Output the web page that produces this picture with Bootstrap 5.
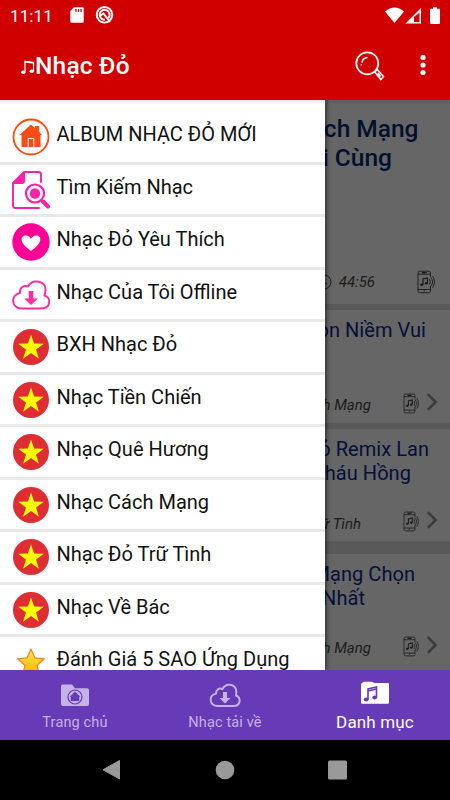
<!DOCTYPE html>
<html lang="vi">
<head>
<meta charset="utf-8">
<meta name="viewport" content="width=device-width, initial-scale=1">
<title>Nhạc Đỏ</title>
<link href="https://cdn.jsdelivr.net/npm/bootstrap@5.3.0/dist/css/bootstrap.min.css" rel="stylesheet">
<style>
body{font-family:Roboto,"Noto Sans",sans-serif;background:#000}
svg{display:block;flex:none}
.screen{width:450px;height:800px}
.topbar{height:100px;background:#d10000;z-index:5}
.status{height:32px;padding:0 9.5px 0 10px}
.clock{font-size:17px;line-height:32px;letter-spacing:.1px}
.status-icons{margin-left:17px}
.titlebar{height:68px;padding:0 24.5px 0 20px}
.app-title{font-size:24.5px;font-weight:500;line-height:68px;letter-spacing:.2px}
.kebab{margin-left:35px}
.content{height:570px;background:#595959;overflow:hidden}
.song{background:#666;color:#04103a;padding-top:8px;height:112.5px;margin-bottom:6px;font-size:20px;line-height:24px;letter-spacing:.05px}
.song.lead-song{height:204px;padding-top:14px;font-size:24.5px;font-weight:500;line-height:29px;letter-spacing:0;color:#00102f}
.song.wide-gap{margin-bottom:13px}
.song.tall{height:140px}
.meta{height:24px;color:#1c1c1c;font-size:15px;font-weight:400;font-style:italic;margin-bottom:7.5px;letter-spacing:0}
.meta .who{padding-top:4px;margin-right:32px}
.meta .who-wide{margin-right:42px}
.lead-song .meta{margin-bottom:10px;padding-right:15px}
.lead-song .who{padding-top:0;margin:0 42px 0 7px}
.chev{margin:-3px 0 0 7px}
.r21{padding-right:21px}.r24{padding-right:24px}.r32{padding-right:31.5px}.r35{padding-right:35px}.r39{padding-right:39px}.r58{padding-right:58px}.r85{padding-right:85px}
.tail{padding-right:12px}
.tall .meta{margin-bottom:36px}
.drawer{left:0;top:0;width:325px;height:570px;background:#fff;overflow:hidden;padding-top:12px;box-shadow:1px 0 5px rgba(0,0,0,.65)}
.entry{height:52.5px;border-bottom:3px solid #e9e9e9;padding-left:12px;color:#111;font-size:20px;letter-spacing:0}
.entry svg{margin-top:1px;margin-right:6.5px}
.entry span{line-height:24px;padding-bottom:5px}
.topshade{left:0;top:0;height:5px;background:linear-gradient(rgba(0,0,0,.09),transparent)}
.tabs{height:70px;background:#673ab7;color:#c5b3e5;font-size:14.5px}
.tabs .tab{padding-top:11px}
.tabs .tab span{line-height:20px;margin-top:4px;letter-spacing:.15px}
.tabs .active-tab{color:#fff;padding-top:9px}
.tabs .active-tab span{font-size:17px;margin-top:5px}
.sysnav{height:60px;color:#999}
</style>
<script src="https://cdn.jsdelivr.net/npm/bootstrap@5.3.0/dist/js/bootstrap.bundle.min.js"></script>
</head>
<body class="m-0">
<svg width="0" height="0" class="position-absolute">
  <symbol id="flag" viewBox="0 0 38 38"><circle cx="19" cy="19" r="18" fill="#df2d34"/><path fill="#ff0" d="M19 6.500l3.100 9.100 9.700.1-7.800 5.800 2.900 9.200-7.900-5.600-7.900 5.600 2.900-9.200-7.800-5.800 9.700-.1z"/></symbol>
  <symbol id="ringtone" viewBox="0 0 18 24"><g fill="none" stroke="#1c1c1c" stroke-width=".9"><rect x="1" y="1.200" width="12.500" height="21.500" rx="1.800"/><path d="M1 4.200h12.500M1 19.500h12.500M7.200 20v1.600"/><path stroke-width="1.500" d="M5 2.700h4.500"/><path d="M6 14.500V9l4.500-1v5" stroke-width="1.200"/></g><path stroke="#666" stroke-width="2.400" d="M13.500 7v9"/><path fill="none" stroke="#1c1c1c" stroke-width=".9" d="M12.400 9.200q2 2.700 0 5.400M14 7.600q3.200 4.200 0 8.600M15.600 6q3.800 6 0 11.800"/><ellipse cx="4.800" cy="14.700" rx="1.600" ry="1.300" fill="#1c1c1c"/><ellipse cx="9.300" cy="13.300" rx="1.500" ry="1.200" fill="#1c1c1c"/></symbol>
  <symbol id="chev" viewBox="0 0 12 18"><path d="M1.800 1.200 9.600 9l-7.800 7.800" fill="none" stroke="#3c3c3c" stroke-width="2.600"/></symbol>
  <linearGradient id="gold" x1="0" y1="0" x2="0" y2="1"><stop offset="0" stop-color="#ffef45"/><stop offset="1" stop-color="#ffb000"/></linearGradient>
</svg>
<div class="screen overflow-hidden">
  <header class="topbar position-relative text-white">
    <div class="status d-flex align-items-center">
      <span class="clock">11:11</span>
      <svg class="status-icons me-auto" width="46" height="20" viewBox="0 0 46 20"><path fill="#fff" d="M4 1.200h8.500a1.200 1.200 0 0 1 1.200 1.200v13.200a1.200 1.200 0 0 1-1.200 1.200h-11A1.200 1.200 0 0 1 .3 15.600V5z"/><path stroke="#d10000" stroke-width="1.300" d="M5.900 3v3M8.500 3v3M11 3v3"/><g fill="none" stroke="#fff"><circle cx="34.500" cy="8.800" r="7.800" stroke-width="1.900"/><path stroke-width="2" d="M38.500 12a5 5 0 1 0-3.500 1.800M30.500 9.500l3-2 6.500 8.500"/></g></svg>
      <svg width="56" height="18" viewBox="0 0 56 18"><path fill="#fff" d="M0 4.500Q9.500-3.500 19 4.500L9.500 16z"/><path fill="#fff" d="M36 1v15.500H20.500z"/><path fill="#d10000" d="M34.500 5.500V15H29v-5z"/><path fill="#fff" d="M48 .3h4v1.500h2.200a.8.8 0 0 1 .8.8v13.500a.8.8 0 0 1-.8.8h-8.400a.8.8 0 0 1-.8-.8V2.600a.8.8 0 0 1 .8-.8H48z"/></svg>
    </div>
    <div class="titlebar d-flex align-items-center">
      <svg width="15" height="18" viewBox="0 0 15 18"><path fill="none" stroke="#fff" stroke-width="1.200" d="M5 15V4.500l8.500 1V14"/><path stroke="#fff" stroke-width="1.800" d="M4.500 4.600l9.500 1.200"/><ellipse cx="3.300" cy="15.300" rx="2.200" ry="1.800" fill="#fff"/><ellipse cx="11.800" cy="14.300" rx="2.200" ry="1.800" fill="#fff"/></svg>
      <span class="app-title">Nhạc Đỏ</span>
      <svg class="ms-auto" width="30" height="30" viewBox="0 0 30 30" fill="none" stroke="#fff"><circle cx="12.300" cy="12.300" r="11" stroke-width="1.700"/><path stroke-width="1.500" d="M7 11.600a6 6 0 0 1 5.500-5"/><path stroke-width="1.500" d="M19.800 21l2.500-2.500 6.200 7-2.700 3zM22.800 22l2.800 3.500"/><path stroke-width="1.300" d="M6.300 13.300v1.200"/></svg>
      <svg class="kebab" width="6" height="22" viewBox="0 0 6 22" fill="#fff"><circle cx="3" cy="2.500" r="2.600"/><circle cx="3" cy="10" r="2.600"/><circle cx="3" cy="17.500" r="2.600"/></svg>
    </div>
  </header>

  <main class="content position-relative">
    <article class="song lead-song d-flex flex-column text-end">
      <div class="r32">Cách Mạng</div><div class="r58">Đời Cùng</div>
      <div class="meta d-flex justify-content-end align-items-center mt-auto"><svg width="16" height="16" viewBox="0 0 16 16" fill="none" stroke="#1c1c1c"><circle cx="8" cy="8" r="7"/><path d="M8 4v4l3 2"/></svg><span class="who">44:56</span><svg width="18" height="24"><use href="#ringtone"/></svg></div>
    </article>
    <article class="song d-flex flex-column text-end">
      <div class="r24">Còn Niềm Vui</div>
      <div class="meta tail d-flex justify-content-end align-items-center mt-auto"><span class="who">Cách Mạng</span><svg width="16" height="21"><use href="#ringtone"/></svg><svg class="chev" width="12" height="18"><use href="#chev"/></svg></div>
    </article>
    <article class="song wide-gap d-flex flex-column text-end">
      <div class="r21">Đỏ Remix Lan</div><div class="r39">Cháu Hồng</div>
      <div class="meta tail d-flex justify-content-end align-items-center mt-auto"><span class="who who-wide">Trữ Tình</span><svg width="16" height="21"><use href="#ringtone"/></svg><svg class="chev" width="12" height="18"><use href="#chev"/></svg></div>
    </article>
    <article class="song tall d-flex flex-column text-end">
      <div class="r35">Mạng Chọn</div><div class="r85">Nhất</div>
      <div class="meta tail d-flex justify-content-end align-items-center mt-auto"><span class="who">Cách Mạng</span><svg width="16" height="21"><use href="#ringtone"/></svg><svg class="chev" width="12" height="18"><use href="#chev"/></svg></div>
    </article>

    <nav class="drawer position-absolute">
      <div class="entry d-flex align-items-center"><svg width="38" height="38" viewBox="0 0 38 38"><circle cx="19" cy="19" r="17.500" fill="none" stroke="#ff4a14" stroke-width="1.800"/><path fill="#ff4a14" d="M19 6.500l4 3.500V8h4v5.500l3 3.500h-1.500v12H9.500V17H7.500z"/><path fill="none" stroke="#fff" d="M16.200 29v-8.500h5.600V29"/></svg><span>ALBUM NHẠC ĐỎ MỚI</span></div>
      <div class="entry d-flex align-items-center"><svg width="38" height="38" viewBox="0 0 38 38"><path fill="none" stroke="#fb21a8" stroke-width="1.900" stroke-linecap="round" stroke-linejoin="round" d="M27 37H3.500Q1 37 1 34.500V12L12 1h14.500Q29 1 29 3.500v7.500"/><path fill="#fb21a8" d="M0 13L13 0v10q0 3-3 3z"/><circle cx="23" cy="22.500" r="9" fill="#fff" stroke="#fb21a8" stroke-width="2.200"/><circle cx="23" cy="22.500" r="5.200" fill="#fb21a8"/><path stroke="#fb21a8" stroke-width="4" stroke-linecap="round" d="M31 30.500l5 5"/></svg><span>Tìm Kiếm Nhạc</span></div>
      <div class="entry d-flex align-items-center"><svg width="38" height="38" viewBox="0 0 38 38"><circle cx="19" cy="19" r="18.700" fill="#ff0096"/><path fill="#fff" d="M19 28C6 19 9 12.500 13.500 12.500c3 0 4.500 1.500 5.500 3.500 1-2 2.500-3.500 5.500-3.500C29 12.500 32 19 19 28z"/></svg><span>Nhạc Đỏ Yêu Thích</span></div>
      <div class="entry d-flex align-items-center"><svg width="38" height="38" viewBox="0 0 38 38"><path fill="none" stroke="#ff2da0" stroke-width="2" stroke-linejoin="round" d="M8.500 32.500h21c9.500 0 10-11 3-13C34.500 12.500 34 6.500 25 5.500c-4.500-.5-7.500 2-9 5-5-2-8.500 2-8 6.500C-1.500 19-1 31 8.500 32.500z"/><path fill="#ff2da0" d="M16.700 15h4.600v7.500h4.500L19 29l-6.800-6.500h4.500z"/></svg><span>Nhạc Của Tôi Offline</span></div>
      <div class="entry d-flex align-items-center"><svg width="38" height="38"><use href="#flag"/></svg><span>BXH Nhạc Đỏ</span></div>
      <div class="entry d-flex align-items-center"><svg width="38" height="38"><use href="#flag"/></svg><span>Nhạc Tiền Chiến</span></div>
      <div class="entry d-flex align-items-center"><svg width="38" height="38"><use href="#flag"/></svg><span>Nhạc Quê Hương</span></div>
      <div class="entry d-flex align-items-center"><svg width="38" height="38"><use href="#flag"/></svg><span>Nhạc Cách Mạng</span></div>
      <div class="entry d-flex align-items-center"><svg width="38" height="38"><use href="#flag"/></svg><span>Nhạc Đỏ Trữ Tình</span></div>
      <div class="entry d-flex align-items-center"><svg width="38" height="38"><use href="#flag"/></svg><span>Nhạc Về Bác</span></div>
      <div class="entry d-flex align-items-center"><svg width="38" height="38" viewBox="0 0 38 38"><path fill="url(#gold)" stroke="#e8872c" stroke-width="1.200" stroke-linejoin="round" d="M19 6l3.800 8.800 9.600 1-7.200 6.500 2 9.500-8.200-4.900-8.200 4.900 2-9.500-7.200-6.500 9.600-1z"/></svg><span>Đánh Giá 5 SAO Ứng Dụng</span></div>
    </nav>
    <div class="topshade position-absolute w-100"></div>
  </main>

  <nav class="tabs row g-0 text-center">
    <div class="tab col-4 d-flex flex-column align-items-center"><svg width="30" height="28" viewBox="0 0 30 28"><path fill="#c5b3e5" d="M2.500 3.500H12l3 3.800h12.500A1.500 1.500 0 0 1 29 8.800V23a2 2 0 0 1-2 2H3a2 2 0 0 1-2-2V5a1.500 1.500 0 0 1 1.500-1.500z"/><circle cx="15" cy="16" r="7" fill="none" stroke="#673ab7" stroke-width="1.200"/><path fill="#673ab7" d="M15 10.500l5 5-.8.8V20h-8.400v-3.700l-.8-.8z"/></svg><span>Trang chủ</span></div>
    <div class="tab col-4 d-flex flex-column align-items-center"><svg width="32" height="28" viewBox="0 0 32 28"><path fill="none" stroke="#c5b3e5" stroke-width="1.900" d="M8 25h16.500c7.500 0 7.800-8.500 2.500-10.500C28 9 27 4.800 21.500 3.800 17.500 3.200 15 5 13.500 8 9.500 6.500 7 9 7 12.700-.5 14.500 0 24 8 25z"/><path fill="#c5b3e5" d="M14 11h4v6h3.500L16 22.500 10.500 17H14z"/></svg><span>Nhạc tải về</span></div>
    <div class="tab active-tab col-4 d-flex flex-column align-items-center"><svg width="30" height="28" viewBox="0 0 30 28"><path fill="#fff" d="M1 5l2.500-2.200H12L14.500 4H27.500A1.200 1.200 0 0 1 29 5.200V23.500A1.200 1.200 0 0 1 27.800 24.700H2.200A1.200 1.200 0 0 1 1 23.500z"/><path fill="none" stroke="#673ab7" stroke-width="1.600" d="M8 20.500V10l8.500-2v10.500M8 12l8.500-2"/><ellipse cx="6.200" cy="20.500" rx="2.400" ry="2" fill="#673ab7"/><ellipse cx="14.700" cy="18.500" rx="2.400" ry="2" fill="#673ab7"/></svg><span>Danh mục</span></div>
  </nav>
  <div class="sysnav row g-0 align-items-center bg-black">
    <div class="col-12 d-flex justify-content-center"><svg width="246" height="22" viewBox="0 0 246 22" fill="#999"><path d="M17.500 1.500v18.500L1 10.800z" stroke="#999" stroke-linejoin="round"/><circle cx="123" cy="11" r="9.300"/><rect x="226" y="1.500" width="19" height="19" rx="1.500"/></svg></div>
  </div>
</div>
</body>
</html>
